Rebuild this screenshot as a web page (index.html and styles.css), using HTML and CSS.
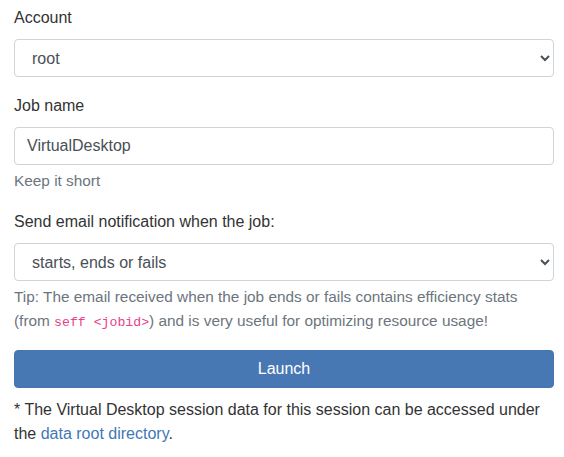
FILE: index.html
```html
<!DOCTYPE html>
<html lang="en">
<head>
<meta charset="utf-8">
<title>Virtual Desktop</title>
<link rel="stylesheet" href="styles.css">
</head>
<body>
<form class="session-form">
  <div class="form-group">
    <label class="form-label" for="account">Account</label>
    <select id="account" class="form-control form-select">
      <option>root</option>
    </select>
  </div>
  <div class="form-group">
    <label class="form-label" for="job_name">Job name</label>
    <input id="job_name" class="form-control" type="text" value="VirtualDesktop">
    <small class="form-text">Keep it short</small>
  </div>
  <div class="form-group">
    <label class="form-label" for="email">Send email notification when the job:</label>
    <select id="email" class="form-control form-select">
      <option>starts, ends or fails</option>
    </select>
    <small class="form-text">Tip: The email received when the job ends or fails contains efficiency stats (from <code>seff &lt;jobid&gt;</code>) and is very useful for optimizing resource usage!</small>
  </div>
  <button type="button" class="btn-launch">Launch</button>
  <p class="footnote">* The Virtual Desktop session data for this session can be accessed under the <a href="#">data root directory</a>.</p>
</form>
</body>
</html>
```
FILE: styles.css
```css
* { box-sizing: border-box; }
html, body {
  margin: 0;
  background: #fff;
}
body {
  font-family: "Liberation Sans", Arial, sans-serif;
  font-size: 16px;
  line-height: 24px;
  color: #333;
}
.session-form {
  padding: 6px 10px 0 14px;
}
.form-group {
  margin-bottom: 17px;
}
.form-label {
  display: block;
  margin-bottom: 9px;
}
.form-control {
  display: block;
  width: 100%;
  height: 38px;
  padding: 6px 12px;
  font-family: inherit;
  font-size: 16px;
  line-height: 24px;
  color: #495057;
  background: #fff;
  border: 1px solid #ced4da;
  border-radius: 4px;
  margin: 0;
}
.form-select {
  padding-left: 13px;
}
.form-text {
  display: block;
  margin-top: 4px;
  font-size: 15.36px;
  line-height: 24px;
  color: #6c757d;
}
code {
  font-family: "Liberation Mono", monospace;
  font-size: 13.2px;
  line-height: 1;
  color: #e83e8c;
}
.btn-launch {
  display: block;
  width: 100%;
  height: 38px;
  padding: 6px 12px;
  font-family: inherit;
  font-size: 16px;
  line-height: 24px;
  color: #fff;
  background: #4878b4;
  border: 1px solid #4674b0;
  border-radius: 4px;
  margin: 0;
}
.footnote {
  margin: 10px 0 0;
  color: #333;
}
.footnote a {
  color: #3f78b7;
  text-decoration: none;
}
```
